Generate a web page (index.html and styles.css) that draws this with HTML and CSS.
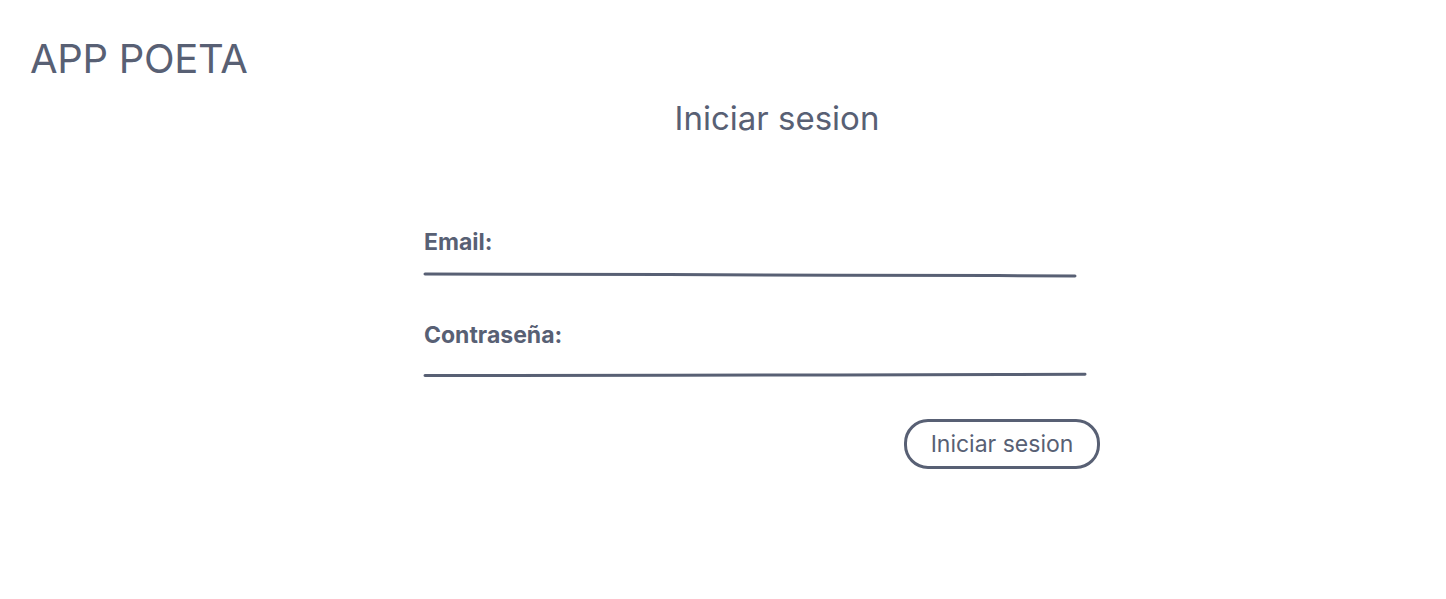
FILE: index.html
```html
<!DOCTYPE html>
<html lang="es">
<head>
<meta charset="utf-8">
<title>APP POETA</title>
<link rel="stylesheet" href="styles.css">
</head>
<body>
<header class="topbar">
  <h1 class="brand">APP POETA</h1>
</header>
<main class="login">
  <h2 class="login-title">Iniciar sesion</h2>
  <form class="login-form">
    <div class="field">
      <label class="field-label" for="email">Email:</label>
      <svg class="field-line field-line-email" width="656" height="8" viewBox="0 0 656 8">
        <polyline points="2,3 85,3.2 245,3.6 410,4.2 575,4.6 652,5" />
      </svg>
    </div>
    <div class="field field-pass">
      <label class="field-label" for="pass">Contraseña:</label>
      <svg class="field-line" width="666" height="8" viewBox="0 0 666 8">
        <polyline points="2,4.6 85,4.4 250,4.2 415,3.9 580,3.6 662,3.3" />
      </svg>
    </div>
    <div class="actions">
      <button type="button" class="btn">Iniciar sesion</button>
    </div>
  </form>
</main>
</body>
</html>
```

FILE: styles.css
```css
* { box-sizing: border-box; }
html, body { margin: 0; padding: 0; background: #ffffff; }
body {
  font-family: Inter, "Noto Sans", "Liberation Sans", sans-serif;
  color: #586074;
  width: 1446px;
  height: 599px;
  overflow: hidden;
}
.topbar { padding: 35px 30px 0; }
.brand {
  margin: 0;
  font-size: 40px;
  font-weight: 400;
  line-height: 48px;
  letter-spacing: -0.3px;
  color: #586074;
}
.login {
  margin-left: 424px;
  width: 706px;
  display: flex;
  flex-direction: column;
}
.login-title {
  margin: 13px 0 0;
  text-align: center;
  font-size: 33px;
  font-weight: 400;
  line-height: 44px;
  color: #586074;
}
.login-form {
  margin-top: 88px;
  display: flex;
  flex-direction: column;
}
.field { display: flex; flex-direction: column; }
.field-pass { margin-top: 42px; }
.field-label {
  font-size: 23px;
  font-weight: 700;
  line-height: 28px;
  color: #586074;
}
.field-line {
  display: block;
  margin-top: 15px;
  margin-left: -1px;
}
.field-line polyline {
  fill: none;
  stroke: #586074;
  stroke-width: 3;
  stroke-linecap: round;
  stroke-linejoin: round;
}
.field-pass .field-line { margin-top: 22px; }
.actions {
  display: flex;
  justify-content: flex-end;
  padding-right: 30px;
  margin-top: 40px;
}
.btn {
  font-family: inherit;
  font-size: 23px;
  color: #586074;
  background: #fff;
  border: 3px solid #586074;
  border-radius: 24px;
  height: 50px;
  width: 196px;
  padding: 0;
  line-height: 1;
}
```
